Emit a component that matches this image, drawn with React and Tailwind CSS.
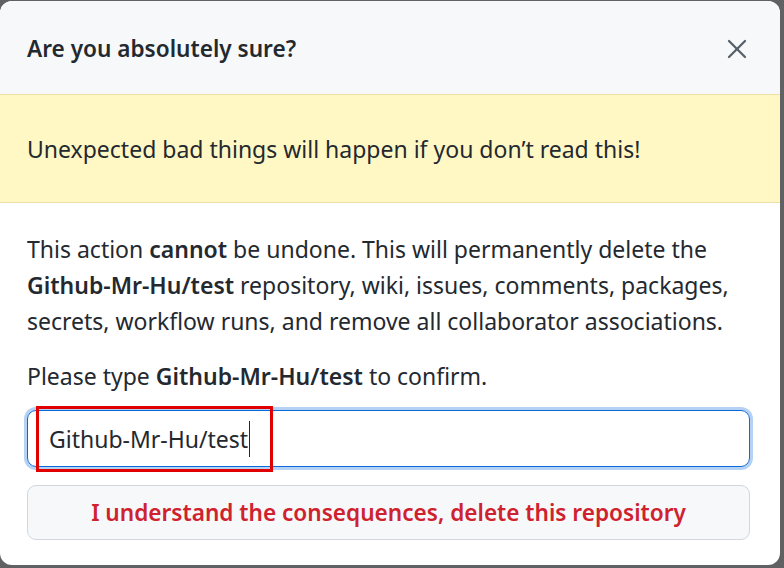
import { X } from 'lucide-react';

function App() {
  return (
    <div className="w-[784px] h-[568px] bg-[#5f6163] pt-px overflow-hidden" style={{ fontFamily: '"Noto Sans", "Open Sans", sans-serif' }}>
      <div className="w-[780px] h-[564px] bg-white rounded-xl overflow-hidden text-[#24292f] flex flex-col">
        {/* header */}
        <div className="h-[93px] bg-[#f6f8fa] flex items-center justify-between pl-[27px] pr-[27px] pt-[2px]">
          <h2 className="text-[22.6px] font-semibold">Are you absolutely sure?</h2>
          <X size={32} strokeWidth={1.7} className="text-[#57606a]" />
        </div>
        {/* warning banner */}
        <div className="h-[109px] bg-[#fff8c5] border-y border-[#ece0a6] flex items-center pl-[27px] pt-[2px] text-[23px]">
          Unexpected bad things will happen if you don’t read this!
        </div>
        {/* body */}
        <div className="pt-[28px] pl-[27px] pr-[30px] text-[23px] leading-[36px]">
          <p>
            This action <strong className="font-semibold">cannot</strong> be undone. This will permanently delete the{' '}
            <strong className="font-semibold whitespace-nowrap">Github-Mr-Hu/test</strong> repository, wiki, issues, comments, packages,
            secrets, workflow runs, and remove all collaborator associations.
          </p>
          <p className="mt-[19px]">
            Please type <strong className="font-semibold whitespace-nowrap">Github-Mr-Hu/test</strong> to confirm.
          </p>
          <div className="relative mt-[16px]">
            <div className="h-[57px] border border-[#0969da] rounded-[9px] shadow-[0_0_0_3px_rgba(9,105,218,0.3)] flex items-center pl-[21px] text-[23px]">
              <span>Github-Mr-Hu/test</span>
              <span className="w-px h-[36px] bg-[#24292f] ml-px"></span>
            </div>
            <div className="absolute left-[9px] top-[-4px] w-[237px] h-[66px] border-[3px] border-[#e00000]"></div>
          </div>
          <button className="mt-[18px] w-full h-[55px] bg-[#f6f8fa] border border-[#d0d7de] rounded-[9px] text-[#cf222e] text-[22.6px] font-semibold">
            I understand the consequences, delete this repository
          </button>
        </div>
      </div>
    </div>
  );
}

export default App;
